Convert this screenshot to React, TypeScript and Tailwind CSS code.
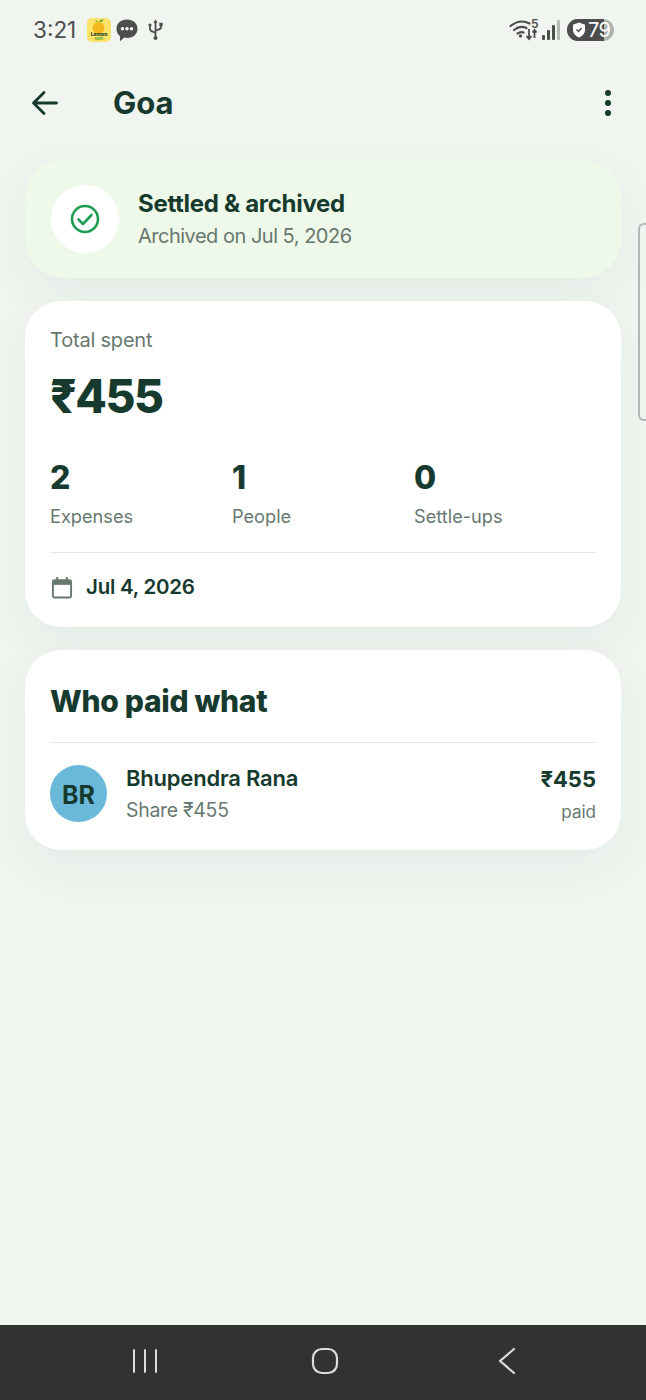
import React from "react";

const Stat = ({ value, label }: { value: string; label: string }) => (
  <div className="flex flex-col">
    <span className="text-[32px] leading-[38px] font-extrabold tracking-[-0.4px] text-[#173a2e]">{value}</span>
    <span className="mt-[6px] text-[18.2px] leading-[26px] text-[#67786f]">{label}</span>
  </div>
);

export default function App() {
  return (
    <div className="relative flex h-[1400px] w-[646px] flex-col overflow-hidden bg-[#f0f5f0] font-['Inter',sans-serif]">
      {/* status bar */}
      <div className="flex h-[60px] shrink-0 items-center justify-between pl-[33px] pr-[32px]">
        <div className="flex items-center">
          <span className="w-[44px] text-[22.5px] leading-[30px] text-[#4d4d4d]">3:21</span>
          <svg className="ml-[10px]" width="24" height="24" viewBox="0 0 24 24">
            <rect width="24" height="24" rx="5" fill="#fde36a" />
            <circle cx="11.500" cy="10" r="6" fill="#f4b81e" />
            <path d="M12 4 Q13 1 16.500 1.500 Q15.500 4.500 12 4z M11 4 Q10 2 8 2.500 Q9 4.500 11 4z" fill="#4c9a22" />
            <text x="12" y="17.500" textAnchor="middle" fontSize="5" fontWeight="800" fill="#24401a">Lemon</text>
            <text x="12" y="22" textAnchor="middle" fontSize="4" fontWeight="600" fill="#4c9a22">·Spin·</text>
          </svg>
          <svg className="ml-[5px]" width="22" height="24" viewBox="0 0 22 24">
            <path d="M11 1.500c6 0 10.500 3.800 10.500 9.200S17 20 11.500 20c-1 0-2.200-.1-3.100-.4L4 23.200V18.300C1.800 16.500.500 14 .500 10.700.500 5.300 5 1.500 11 1.500z" fill="#4d4d4d" />
            <circle cx="6.500" cy="10.700" r="1.700" fill="#fff" /><circle cx="11" cy="10.700" r="1.700" fill="#fff" /><circle cx="15.500" cy="10.700" r="1.700" fill="#fff" />
          </svg>
          <svg className="ml-[10px]" width="15" height="22" viewBox="0 0 15 22" fill="none" stroke="#4d4d4d" strokeWidth="1.800">
            <path d="M7.500 3v16M2 6.500v3q0 2.500 2.500 3l3 1.500M13 6v2q0 2-2.500 2.500L7.500 12" />
            <path d="M7.500 0.500l2.200 3.200H5.300z" fill="#4d4d4d" stroke="none" />
            <circle cx="7.500" cy="19" r="2" fill="#4d4d4d" stroke="none" />
            <circle cx="2" cy="6" r="1.600" fill="#4d4d4d" stroke="none" />
            <rect x="11.300" y="3.800" width="3.400" height="3.400" fill="#4d4d4d" stroke="none" />
          </svg>
        </div>
        <div className="flex items-center">
          <svg width="29" height="22" viewBox="0 0 29 22" fill="none" stroke="#4d4d4d" strokeWidth="2.200" strokeLinecap="round">
            <path d="M1.500 7Q11 -0.500 20.500 4.500M5 11q6-5 12.500-2M8.500 14.500q3-2 6-1" />
            <circle cx="11.500" cy="17" r="1.700" fill="#4d4d4d" stroke="none" />
            <path d="M20 10v10m-2.500-3 2.500 3 2.500-3M25.500 19V11m-2 2.500 2-2.500 2 2.500" strokeWidth="1.800" strokeLinecap="butt" />
          </svg>
          <span className="ml-[-7px] mt-[-13px] w-[6px] text-[12px] leading-[12px] font-semibold text-[#4d4d4d]">5</span>
          <svg className="ml-[5px]" width="18" height="20" viewBox="0 0 18 20">
            <rect x="0" y="15" width="3" height="5" rx="1" fill="#4d4d4d" />
            <rect x="5" y="10" width="3" height="10" rx="1" fill="#4d4d4d" />
            <rect x="10" y="5" width="3" height="15" rx="1" fill="#4d4d4d" />
            <rect x="15" y="0" width="3" height="20" rx="1" fill="#b4b9b4" />
          </svg>
          <div className="relative ml-[7px] flex h-[22px] w-[47px] items-center overflow-hidden rounded-[11px] bg-[#aeb4ae]">
            <div className="absolute inset-y-0 left-0 w-[37px] bg-[#4d4d4d]" />
            <svg className="relative ml-[5px]" width="14" height="16" viewBox="0 0 14 16">
              <path d="M7 0.500l6 2.200v5c0 3.500-2.500 6.300-6 7.800C3.500 14 1 11.200 1 7.700v-5z" fill="#fff" />
              <path d="M4.500 7.500l2 2 3-3.500" fill="none" stroke="#4d4d4d" strokeWidth="1.400" />
            </svg>
            <span className="relative ml-[2px] text-[20px] leading-[22px] tracking-[-0.5px] text-white">79</span>
          </div>
        </div>
      </div>

      {/* app bar */}
      <div className="flex h-[86px] shrink-0 items-center pl-[31px] pr-[33px]">
        <svg width="27" height="28" viewBox="0 0 27 28" fill="none" stroke="#173a2e" strokeWidth="2.800" strokeLinecap="round" strokeLinejoin="round">
          <path d="M25.500 14H3M13 3.500 2.500 14 13 24.500" />
        </svg>
        <h1 className="ml-[55px] text-[31px] leading-[36px] font-bold text-[#173a2e]">Goa</h1>
        <svg className="ml-auto" width="10" height="28" viewBox="0 0 10 28" fill="#173a2e">
          <circle cx="5" cy="4" r="3" /><circle cx="5" cy="14" r="3" /><circle cx="5" cy="24" r="3" />
        </svg>
      </div>

      {/* content */}
      <div className="mt-[14px] flex flex-col gap-[23px] px-[25px]">
        <div className="flex h-[118px] items-center rounded-[38px] bg-[#eff9e9] pl-[26px] shadow-[0_16px_48px_rgba(20,50,35,0.05)]">
          <div className="flex h-[68px] w-[68px] items-center justify-center rounded-full bg-white">
            <svg width="30" height="30" viewBox="0 0 30 30" fill="none" stroke="#1f9d55" strokeWidth="2.600" strokeLinecap="round" strokeLinejoin="round">
              <circle cx="15" cy="15" r="13" />
              <path d="M8.500 15.500l4.500 4.500 8.500-9" />
            </svg>
          </div>
          <div className="ml-[19px] flex flex-col">
            <span className="text-[24px] leading-[30px] font-bold tracking-[-0.3px] text-[#173a2e]">Settled &amp; archived</span>
            <span className="mt-[4px] text-[20px] leading-[26px] tracking-[-0.5px] text-[#67786f]">Archived on Jul 5, 2026</span>
          </div>
        </div>

        <div className="flex h-[326px] flex-col rounded-[36px] bg-white px-[25px] pt-[26px] shadow-[0_16px_48px_rgba(20,50,35,0.05)]">
          <span className="text-[20px] leading-[26px] tracking-[-0.2px] text-[#67786f]">Total spent</span>
          <span className="mt-[15px] text-[46px] leading-[56px] font-extrabold tracking-[-1.500px] text-[#173a2e]">₹455</span>
          <div className="mt-[35px] grid grid-cols-[182px_182px_1fr]">
            <Stat value="2" label="Expenses" />
            <Stat value="1" label="People" />
            <Stat value="0" label="Settle-ups" />
          </div>
          <div className="mt-[23px] h-[1px] bg-[#e3ebe5]" />
          <div className="mt-[20px] flex items-center">
            <svg className="ml-[1px]" width="22" height="23" viewBox="0 0 23 23" fill="none" stroke="#67786f" strokeWidth="2">
              <rect x="2" y="4" width="19" height="18" rx="1.500" />
              <path d="M2 6.500h19" strokeWidth="4.500" />
              <path d="M6.500 0.500v4M16.500 0.500v4" strokeWidth="2" />
            </svg>
            <span className="ml-[13px] text-[20.500px] leading-[28px] font-semibold tracking-[-0.25px] text-[#173a2e]">Jul 4, 2026</span>
          </div>
        </div>

        <div className="flex h-[200px] flex-col rounded-[36px] bg-white px-[25px] pt-[30px] shadow-[0_16px_48px_rgba(20,50,35,0.05)]">
          <h2 className="text-[30px] leading-[42px] font-extrabold tracking-[-0.3px] text-[#173a2e]">Who paid what</h2>
          <div className="mt-[20px] h-[1px] bg-[#e3ebe5]" />
          <div className="mt-[22px] flex items-start">
            <div className="flex h-[57px] w-[57px] items-center justify-center rounded-full bg-[#6bb9da] pt-[4px] text-[25px] font-bold text-[#173a2e]">BR</div>
            <div className="ml-[19px] flex flex-col">
              <span className="mt-[-1px] text-[22px] leading-[28px] font-semibold tracking-[-0.2px] text-[#173a2e]">Bhupendra Rana</span>
              <span className="mt-[5px] text-[19.500px] leading-[26px] tracking-[-0.3px] text-[#67786f]">Share ₹455</span>
            </div>
            <div className="ml-auto flex flex-col items-end">
              <span className="text-[22px] leading-[28px] font-bold text-[#173a2e]">₹455</span>
              <span className="mt-[7px] text-[17px] leading-[24px] text-[#67786f]">paid</span>
            </div>
          </div>
        </div>
      </div>

      {/* edge handle */}
      <div className="absolute right-0 top-[223px] h-[198px] w-[8px] rounded-l-[6px] border-y-2 border-l-2 border-[#b4b8b4]" />

      {/* nav bar */}
      <div className="mt-auto flex h-[75px] shrink-0 items-center bg-[#323232] pb-[3px] pl-[132px]">
        <svg width="26" height="26" viewBox="0 0 26 26" stroke="#dcdcdc" strokeWidth="2" strokeLinecap="round">
          <path d="M2 2v22M13 2v22M24 2v22" />
        </svg>
        <svg className="ml-[153px]" width="28" height="28" viewBox="0 0 28 28" fill="none" stroke="#dcdcdc" strokeWidth="2.200">
          <rect x="2" y="2" width="24" height="24" rx="9" />
        </svg>
        <svg className="ml-[159px]" width="18" height="28" viewBox="0 0 18 28" fill="none" stroke="#dcdcdc" strokeWidth="2.200" strokeLinecap="round" strokeLinejoin="round">
          <path d="M16 2 2 14l14 12" />
        </svg>
      </div>
    </div>
  );
}
